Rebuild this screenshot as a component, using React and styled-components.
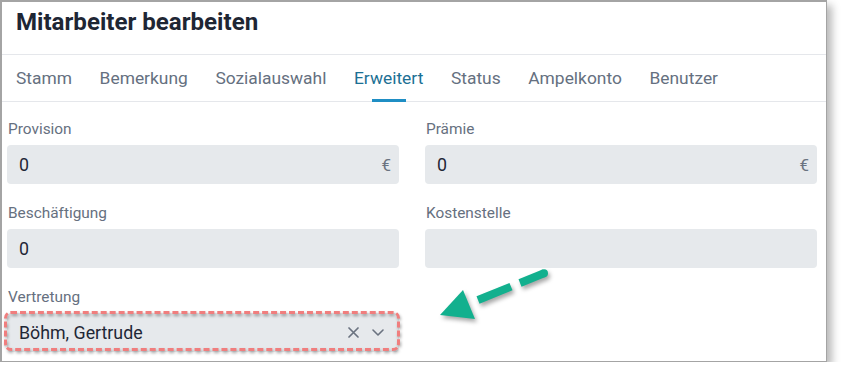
import React from "react";
import styled, { createGlobalStyle } from "styled-components";

const Global = createGlobalStyle`
  html, body { margin: 0; padding: 0; background: #fff; }
  body { font-family: Roboto, "Noto Sans", "Liberation Sans", sans-serif; }
  * { box-sizing: border-box; }
`;

const Frame = styled.div`
  position: relative;
  width: 827px;
  height: 362px;
  border: 2px solid #a4a4a4;
  border-right-width: 1.5px;
  border-bottom-width: 1.5px;
  background: #fff;
  box-shadow: 5px 5px 8px rgba(0, 0, 0, 0.28);
  overflow: visible;
`;

const Header = styled.div`
  height: 53px;
  display: flex;
  align-items: center;
  padding: 0 14px 12px;
  border-bottom: 1px solid #e5e7eb;
`;

const Title = styled.h1`
  margin: 0;
  font-size: 24.1px;
  font-weight: 700;
  color: #1e2634;
`;

const Tabs = styled.div`
  height: 47px;
  display: flex;
  align-items: stretch;
  gap: 27.6px;
  padding-left: 14px;
  border-bottom: 1px solid #e5e7eb;
`;

const Tab = styled.div`
  position: relative;
  display: flex;
  align-items: center;
  font-size: 17.4px;
  color: ${(p) => (p.$active ? "#1c7094" : "#657080")};
  &::after {
    content: "";
    display: ${(p) => (p.$active ? "block" : "none")};
    position: absolute;
    left: 50%;
    bottom: -1px;
    width: 34px;
    margin-left: -17px;
    height: 3px;
    background: #1f8ec4;
  }
`;

const Form = styled.div`
  display: grid;
  grid-template-columns: 392px 392px;
  column-gap: 26px;
  row-gap: 19px;
  padding: 17px 0 0 5px;
`;

const Field = styled.div`
  display: flex;
  flex-direction: column;
  gap: 6px;
`;

const Label = styled.div`
  height: 20px;
  line-height: 20px;
  font-size: 15.4px;
  color: #667080;
  padding-left: 1px;
`;

const Input = styled.div`
  position: relative;
  height: 39px;
  border-radius: 4px;
  background: #e6e9ec;
  display: flex;
  align-items: center;
  padding: 0 8px 0 12px;
  font-size: 17.8px;
  color: #1f2736;
`;

const Value = styled.span`
  flex: 1;
`;

const Suffix = styled.span`
  color: #6b7380;
  font-size: 17px;
`;

const Annotated = styled(Input)`
  &::after {
    content: "";
    position: absolute;
    inset: -2px -1px 1px -3px;
    border: 3px dashed #f07e7e;
    border-radius: 7px;
    filter: drop-shadow(1px 2px 1.5px rgba(0, 0, 0, 0.35));
    pointer-events: none;
  }
`;

const Icons = styled.div`
  display: flex;
  align-items: center;
  gap: 13px;
  padding-right: 7px;
`;

const Arrow = styled.svg`
  position: absolute;
  left: 0;
  top: 0;
  overflow: visible;
  pointer-events: none;
  filter: drop-shadow(2px 3px 2px rgba(0, 0, 0, 0.35));
`;

const tabs = ["Stamm", "Bemerkung", "Sozialauswahl", "Erweitert", "Status", "Ampelkonto", "Benutzer"];

export default function App() {
  return (
    <>
      <Global />
      <Frame>
        <Header>
          <Title>Mitarbeiter bearbeiten</Title>
        </Header>
        <Tabs>
          {tabs.map((t) => (
            <Tab key={t} $active={t === "Erweitert"}>
              {t}
            </Tab>
          ))}
        </Tabs>
        <Form>
          <Field>
            <Label>Provision</Label>
            <Input>
              <Value>0</Value>
              <Suffix>€</Suffix>
            </Input>
          </Field>
          <Field>
            <Label>Prämie</Label>
            <Input>
              <Value>0</Value>
              <Suffix>€</Suffix>
            </Input>
          </Field>
          <Field>
            <Label>Beschäftigung</Label>
            <Input>
              <Value>0</Value>
            </Input>
          </Field>
          <Field>
            <Label>Kostenstelle</Label>
            <Input />
          </Field>
          <Field>
            <Label>Vertretung</Label>
            <Annotated>
              <Value>Böhm, Gertrude</Value>
              <Icons>
                <svg width="11" height="11" viewBox="0 0 11 11">
                  <path d="M1 1L10 10M10 1L1 10" stroke="#6b7380" strokeWidth="1.7" strokeLinecap="round" />
                </svg>
                <svg width="12" height="7" viewBox="0 0 12 7">
                  <path d="M1 1L6 6L11 1" stroke="#6b7380" strokeWidth="1.6" fill="none" strokeLinecap="round" strokeLinejoin="round" />
                </svg>
              </Icons>
            </Annotated>
          </Field>
        </Form>
        <Arrow width="827" height="362" viewBox="0 0 827 362">
          <g transform="translate(-2,-2)">
            <line x1="544" y1="273.3" x2="520" y2="283" stroke="#12b08e" strokeWidth="8" />
            <circle cx="544" cy="273.3" r="4" fill="#12b08e" />
            <line x1="511" y1="286.6" x2="478" y2="300" stroke="#12b08e" strokeWidth="8" />
            <polygon points="440,315 463,290 475,319" fill="#12b08e" />
          </g>
        </Arrow>
      </Frame>
    </>
  );
}
